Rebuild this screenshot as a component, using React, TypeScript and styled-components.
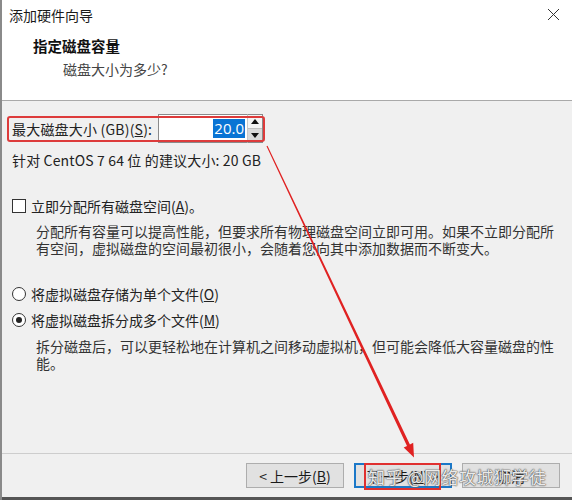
import styled, { createGlobalStyle } from 'styled-components';

const GlobalStyle = createGlobalStyle`
  html, body {
    margin: 0;
    padding: 0;
    background: #ffffff;
  }
  body {
    font-family: "Noto Sans CJK SC", "Liberation Sans", sans-serif;
  }
`;

const UI_FONT = `"Noto Sans CJK SC", "Liberation Sans", sans-serif`;

// 窗口外框
const Window = styled.div`
  position: relative;
  width: 572px;
  height: 500px;
  overflow: hidden;
  display: flex;
  flex-direction: column;
  box-sizing: border-box;
  border-left: 2px solid #8a8a8a;
  background: #f0f0f0;
  font-family: ${UI_FONT};
  color: #1a1a1a;
`;

const Header = styled.div`
  height: 100px;
  background: #ffffff;
  border-bottom: 1px solid #a9a9a9;
  display: flex;
  flex-direction: column;
`;

const TitleBar = styled.div`
  height: 29px;
  display: flex;
  align-items: center;
  justify-content: space-between;
  padding: 0 12px 0 7px;
`;

const TitleText = styled.span`
  font-size: 14px;
  color: #1a1a1a;
`;

const Heading = styled.div`
  margin: 8px 0 0 31px;
  font-size: 14.5px;
  line-height: 18px;
  font-weight: 700;
  color: #111;
`;

const SubHeading = styled.div`
  margin: 5px 0 0 61px;
  font-size: 14px;
  line-height: 18px;
  color: #444;
`;

const Body = styled.div`
  flex: 1;
  display: flex;
  flex-direction: column;
  padding-left: 10px;
`;

const FieldRow = styled.div`
  position: relative;
  margin-top: 13px;
  height: 29px;
  display: flex;
  align-items: center;

  /* 标注用的红框 */
  &::after {
    content: '';
    position: absolute;
    left: -5px;
    top: 2px;
    width: 258px;
    height: 26px;
    border: 2px solid #dd3b3b;
    border-radius: 3px;
    box-sizing: border-box;
    pointer-events: none;
  }
`;

const FieldLabel = styled.span`
  width: 146px;
  font-size: 14px;
  letter-spacing: 0.2px;
  color: #222;
  white-space: nowrap;
`;

const SpinInput = styled.div`
  width: 89px;
  height: 29px;
  box-sizing: border-box;
  background: #fff;
  border: 1px solid #8a8a8a;
  border-right: none;
  display: flex;
  align-items: center;
  justify-content: flex-end;
  padding-right: 2px;
`;

const Selected = styled.span`
  background: #0a74d4;
  color: #fff;
  font-family: "Open Sans", "Liberation Sans", sans-serif;
  font-size: 15px;
  line-height: 19px;
  padding: 0 1px;
`;

const SpinButtons = styled.div`
  width: 16px;
  height: 29px;
  display: flex;
  flex-direction: column;
  box-sizing: border-box;
  border: 1px solid #8a8a8a;
  border-left: 1px solid #c8c8c8;
`;

const SpinHalf = styled.div<{ $down?: boolean }>`
  flex: 1;
  display: flex;
  align-items: center;
  justify-content: center;
  background: ${(p) => (p.$down ? '#dadada' : '#f4f4f4')};
  border-top: ${(p) => (p.$down ? '1px solid #c0c0c0' : 'none')};
`;

const Hint = styled.div`
  margin-top: 8px;
  font-size: 14px;
  line-height: 18px;
  letter-spacing: 0.15px;
  color: #222;
`;

const OptionRow = styled.div<{ $gap: number }>`
  margin-top: ${(p) => p.$gap}px;
  height: 18px;
  display: flex;
  align-items: center;
  gap: 5px;
  font-size: 14px;
  color: #222;
`;

const CheckBox = styled.span`
  width: 14px;
  height: 14px;
  box-sizing: border-box;
  border: 1px solid #333;
  background: #fff;
`;

const Radio = styled.span<{ $checked?: boolean }>`
  width: 14px;
  height: 14px;
  box-sizing: border-box;
  border: 1px solid #333;
  border-radius: 50%;
  background: #fff;
  display: flex;
  align-items: center;
  justify-content: center;

  &::after {
    content: '';
    width: 6px;
    height: 6px;
    border-radius: 50%;
    background: ${(p) => (p.$checked ? '#222' : 'transparent')};
  }
`;

const Desc = styled.div<{ $gap: number }>`
  margin: ${(p) => p.$gap}px 0 0 24px;
  font-size: 14px;
  line-height: 17px;
  color: #333;
  white-space: nowrap;
`;

const Footer = styled.div`
  height: 47px;
  border-top: 1px solid #cdcdcd;
  display: flex;
  justify-content: flex-end;
  align-items: flex-start;
  gap: 10px;
  padding: 9px 12px 0 0;
  box-sizing: border-box;
`;

const Button = styled.div<{ $focused?: boolean; $marked?: boolean }>`
  position: relative;
  width: 98px;
  height: 25px;
  box-sizing: border-box;
  background: #e1e1e1;
  border: ${(p) => (p.$focused ? '2px solid #1b78c8' : '1px solid #adadad')};
  display: flex;
  align-items: center;
  justify-content: center;
  font-size: 14px;
  color: #1a1a1a;

  ${(p) =>
    p.$marked &&
    `
    &::after {
      content: '';
      position: absolute;
      left: 8px;
      top: -2px;
      width: 77px;
      height: 27px;
      border: 2px solid #e03030;
      box-sizing: border-box;
    }
  `}
`;

const Overlay = styled.svg`
  position: absolute;
  left: -2px;
  top: 0;
  pointer-events: none;
`;

const Watermark = styled.div`
  position: absolute;
  left: 366px;
  top: 464px;
  font-size: 17px;
  letter-spacing: 0.5px;
  color: rgba(255, 255, 255, 0.9);
  text-shadow: 0 0 1px #555, 0 0 1px #555, 0 0 2px #777;
  white-space: nowrap;
  pointer-events: none;
`;

const BottomEdge = styled.div`
  position: absolute;
  left: 0;
  right: 0;
  bottom: 0;
  height: 3px;
  background: #555;
`;

export default function App() {
  return (
    <>
      <GlobalStyle />
      <Window>
        <Header>
          <TitleBar>
            <TitleText>添加硬件向导</TitleText>
            <svg width="13" height="13" viewBox="0 0 13 13">
              <path d="M1 1 L12 12 M12 1 L1 12" stroke="#333" strokeWidth="1" fill="none" />
            </svg>
          </TitleBar>
          <Heading>指定磁盘容量</Heading>
          <SubHeading>磁盘大小为多少?</SubHeading>
        </Header>

        <Body>
          <FieldRow>
            <FieldLabel>
              最大磁盘大小 (GB)(<u>S</u>):
            </FieldLabel>
            <SpinInput>
              <Selected>20.0</Selected>
            </SpinInput>
            <SpinButtons>
              <SpinHalf>
                <svg width="8" height="5" viewBox="0 0 8 5">
                  <path d="M0 5 L4 0 L8 5 Z" fill="#111" />
                </svg>
              </SpinHalf>
              <SpinHalf $down>
                <svg width="8" height="5" viewBox="0 0 8 5">
                  <path d="M0 0 L8 0 L4 5 Z" fill="#111" />
                </svg>
              </SpinHalf>
            </SpinButtons>
          </FieldRow>

          <Hint>针对 CentOS 7 64 位 的建议大小: 20 GB</Hint>

          <OptionRow $gap={28}>
            <CheckBox />
            <span>
              立即分配所有磁盘空间(<u>A</u>)。
            </span>
          </OptionRow>
          <Desc $gap={8}>
            分配所有容量可以提高性能，但要求所有物理磁盘空间立即可用。如果不立即分配所
            <br />
            有空间，虚拟磁盘的空间最初很小，会随着您向其中添加数据而不断变大。
          </Desc>

          <OptionRow $gap={28}>
            <Radio />
            <span>
              将虚拟磁盘存储为单个文件(<u>O</u>)
            </span>
          </OptionRow>
          <OptionRow $gap={8}>
            <Radio $checked />
            <span>
              将虚拟磁盘拆分成多个文件(<u>M</u>)
            </span>
          </OptionRow>
          <Desc $gap={9}>
            拆分磁盘后，可以更轻松地在计算机之间移动虚拟机，但可能会降低大容量磁盘的性
            <br />
            能。
          </Desc>
        </Body>

        <Footer>
          <Button>
            &lt; 上一步(<u>B</u>)
          </Button>
          <Button $focused $marked>
            下一步(<u>N</u>) &gt;
          </Button>
          <Button>取消</Button>
        </Footer>

        {/* 红色标注箭头 */}
        <Overlay width="572" height="500" viewBox="0 0 572 500">
          <polygon
            points="267.5,145.7 409.9,444.6 413.2,442.8 414,457.5 403.7,447.6 407.0,445.9 266.5,146.3"
            fill="#e02222"
          />
        </Overlay>

        <Watermark>知乎 @网络攻城狮学徒</Watermark>
        <BottomEdge />
      </Window>
    </>
  );
}
